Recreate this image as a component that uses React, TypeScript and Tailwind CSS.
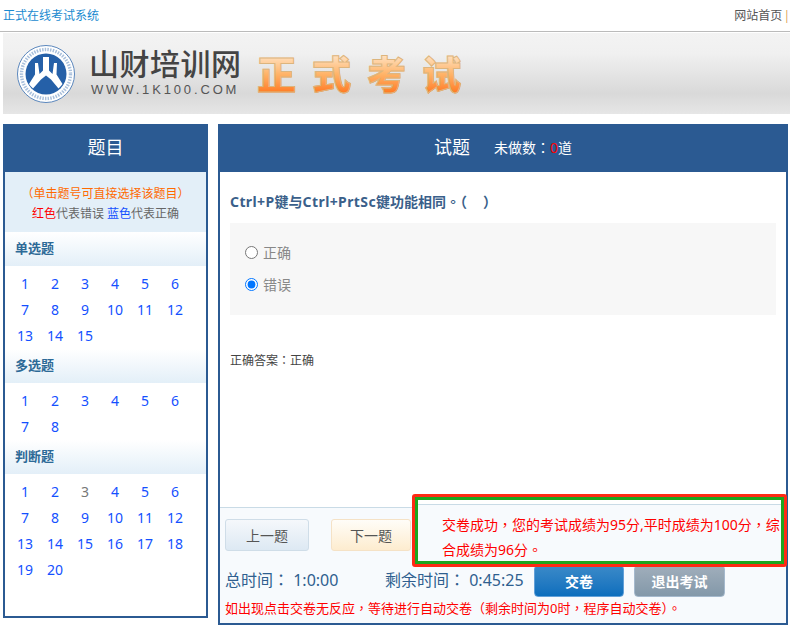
import type { ReactNode } from 'react'

const FONT = "font-['Noto_Sans','Noto_Sans_CJK_SC',sans-serif]"

const singles = Array.from({ length: 15 }, (_, i) => i + 1)
const multis = Array.from({ length: 8 }, (_, i) => i + 1)
const judges = Array.from({ length: 20 }, (_, i) => i + 1)

// full-width punctuation sits centred in the box in the original, as the TC font draws it
function Pn({ children }: { children: ReactNode }) {
  return <span className="font-['Noto_Sans_CJK_TC',sans-serif]">{children}</span>
}

function Seal() {
  return (
    <svg width="60" height="60" viewBox="0 0 60 60" className="ml-[13px] shrink-0">
      <circle cx="30" cy="30" r="28.5" fill="#fff" stroke="#5b87bd" strokeWidth="1" />
      <circle cx="30" cy="30" r="24.5" fill="none" stroke="#a9c0dc" strokeWidth="3.4" strokeDasharray="1.5 1.2" />
      <circle cx="30" cy="30" r="20.5" fill="#2560a8" />
      <path
        d="M19 19h3l1.500 11 3.500-3.500V13h6v13.500l3.500 3.500L38 19h3l-.5 11.500 6 9.500a20.500 20.500 0 0 1-4 4.500L35 35.500l-5-4-5 4-8 9a20.500 20.500 0 0 1-4-4.500l6-9.500z"
        fill="#fff"
      />
    </svg>
  )
}

function Brand() {
  return (
    <div className="flex flex-col ml-[13px] w-[155px] -mt-[1px]">
      <span className="text-[30px] leading-[32px] font-medium text-[#444] tracking-[0.5px] whitespace-nowrap">山财培训网</span>
      <span className="text-[13px] leading-[16px] mt-[2px] ml-[2px] text-[#555] tracking-[2.85px] whitespace-nowrap font-['Liberation_Sans',sans-serif]">
        WWW.1K100.COM
      </span>
    </div>
  )
}

function ExamTitle() {
  return (
    <div className="flex gap-[16px] ml-[13px]">
      {['正', '式', '考', '试'].map(c => (
        <span
          key={c}
          className="text-[39px] leading-[44px] font-black text-transparent bg-clip-text bg-gradient-to-b from-[#ffe9cf] via-[#ffb468] to-[#ff6f00] [-webkit-text-stroke:1px_#dcb57e]"
        >
          {c}
        </span>
      ))}
    </div>
  )
}

function SectionTitle({ label }: { label: string }) {
  return (
    <div className="h-[34px] pl-[10px] flex items-center text-[13px] font-bold text-[#2d6a97] bg-gradient-to-b from-white to-[#e3eff8]">
      {label}
    </div>
  )
}

function Numbers({ items, grey }: { items: number[]; grey?: number }) {
  return (
    <div className="grid grid-cols-[repeat(6,30px)] auto-rows-[26px] pl-[5px] pt-[4px] pb-[1px]">
      {items.map(n => (
        <a
          key={n}
          className={`flex items-center justify-center text-[14px] ${n === grey ? 'text-[#777]' : 'text-[#1450ff]'}`}
        >
          {n}
        </a>
      ))}
    </div>
  )
}

function Sidebar() {
  return (
    <div className="w-[205px] h-[494px] shrink-0 border-x-2 border-b-2 border-[#2b5a92] bg-white">
      <div className="h-[48px] pb-[1px] flex items-center justify-center bg-[#2b5a92] text-white text-[18px]">题目</div>
      <div className="h-[60px] pt-[12px] bg-[#e3eff8] text-center text-[12px] leading-[20px] text-[#666]">
        <p className="text-[#ff6a00] whitespace-nowrap">（单击题号可直接选择该题目）</p>
        <p className="whitespace-nowrap">
          <span className="text-[#ff0000]">红色</span>代表错误 <span className="text-[#1450ff]">蓝色</span>代表正确
        </p>
      </div>
      <SectionTitle label="单选题" />
      <Numbers items={singles} />
      <SectionTitle label="多选题" />
      <Numbers items={multis} />
      <SectionTitle label="判断题" />
      <Numbers items={judges} grey={3} />
    </div>
  )
}

function Option({ label, checked }: { label: string; checked?: boolean }) {
  return (
    <label className="h-[32px] flex items-center gap-[5px] text-[14px] text-[#888]">
      <input type="radio" name="answer" defaultChecked={checked} className="m-0 w-[13px] h-[13px]" />
      {label}
    </label>
  )
}

function Question() {
  return (
    <div className="flex-1 px-[10px] pt-[19px]">
      <h2 className="text-[14px] leading-[20px] font-bold text-[#3a5f8a]">
        <span className="tracking-[0.4px]">Ctrl+P</span>键与<span className="tracking-[0.4px]">Ctrl+PrtSc</span>键功能相同
        <Pn>。（{'\u00a0\u00a0\u00a0\u00a0\u00a0'}）</Pn>
      </h2>
      <div className="mt-[11px] h-[92px] pt-[13px] pl-[15px] bg-[#f7f7f7]">
        <Option label="正确" />
        <Option label="错误" checked />
      </div>
      <p className="mt-[35px] text-[12px] leading-[20px] text-[#444]">
        正确答案<Pn>：</Pn>正确
      </p>
    </div>
  )
}

function Footer() {
  return (
    <div className="h-[116px] border-t border-[#c9dbe6] bg-[#f7fafd] pl-[5px] pt-[11px]">
      <div className="flex gap-[22px]">
        <button className="w-[84px] h-[32px] rounded-[3px] border border-[#cfdde8] bg-gradient-to-b from-[#f5f8fb] to-[#dde9f3] text-[14px] text-[#555]">
          上一题
        </button>
        <button className="w-[80px] h-[32px] rounded-[3px] border border-[#f5e2c6] bg-gradient-to-b from-[#fffdf8] to-[#fdeccf] text-[14px] text-[#555]">
          下一题
        </button>
      </div>
      <div className="flex items-center mt-[14px] h-[32px]">
        <span className="w-[160px] pb-[4px] text-[16px] text-[#2f5f8f] whitespace-nowrap">
          总时间<Pn>：</Pn> 1:0:00
        </span>
        <span className="w-[149px] pb-[4px] text-[16px] text-[#2f5f8f] whitespace-nowrap">
          剩余时间<Pn>：</Pn> 0:45:25
        </span>
        <button className="w-[90px] h-[32px] rounded-[4px] border border-[#62a0d8] bg-gradient-to-b from-[#3a8ac8] to-[#0a6ebd] text-[14px] font-bold text-white">
          交卷
        </button>
        <button className="ml-[10px] w-[91px] h-[32px] rounded-[4px] border border-[#a5b9cd] bg-gradient-to-b from-[#a0aebb] to-[#8398a9] text-[14px] font-bold text-white">
          退出考试
        </button>
      </div>
      <p className="mt-[1px] text-[13px] leading-[20px] text-[#ff0000] whitespace-nowrap">
        如出现点击交卷无反应<Pn>，</Pn>等待进行自动交卷（剩余时间为0时<Pn>，</Pn>程序自动交卷）<Pn>。</Pn>
      </p>
    </div>
  )
}

function ResultNotice() {
  return (
    <div className="absolute left-[192px] top-[370px] w-[375px] h-[73px] rounded-[3px] border-[3px] border-[#ff2a14]">
      <div className="h-full border-[3px] border-[#1ea51e] pl-[24px] pt-[12px] text-[14px] leading-[24px] text-[#ff0000] whitespace-nowrap bg-[linear-gradient(to_bottom,#fff_4px,#c9dbe6_4px,#c9dbe6_5px,#f7fafd_5px)]">
        交卷成功<Pn>，</Pn>您的考试成绩为95分,平时成绩为100分<Pn>，</Pn>综
        <br />
        合成绩为96分<Pn>。</Pn>
      </div>
    </div>
  )
}

export default function App() {
  return (
    <div className={`w-[790px] h-[630px] overflow-hidden bg-white ${FONT}`}>
      <div className="h-[32px] border-b border-[#bbb] pl-[3px] flex items-center justify-between text-[12px]">
        <span className="text-[#1a8ad0]">正式在线考试系统</span>
        <span className="text-[#555]">
          网站首页<span className="text-[#e0a860] ml-[1px]">|</span>
        </span>
      </div>
      <div className="ml-[3px] mt-[1px] h-[81px] flex items-center bg-[linear-gradient(to_bottom,#f3f3f3,#f0f0f0_25%,#d9d9d9_75%,#e6e6e6)]">
        <Seal />
        <Brand />
        <ExamTitle />
      </div>
      <div className="flex gap-[10px] pl-[3px] mt-[10px]">
        <Sidebar />
        <div className="relative w-[570px] h-[501px] flex flex-col border-x-2 border-b-2 border-[#2b5a92]">
          <div className="h-[48px] pb-[1px] shrink-0 flex items-center justify-center gap-[24px] bg-[#2b5a92] text-white">
            <span className="text-[18px]">试题</span>
            <span className="text-[14px]">
              未做数<Pn>：</Pn>
              <span className="text-[#ff0000]">0</span>道
            </span>
          </div>
          <Question />
          <Footer />
          <ResultNotice />
        </div>
      </div>
    </div>
  )
}
